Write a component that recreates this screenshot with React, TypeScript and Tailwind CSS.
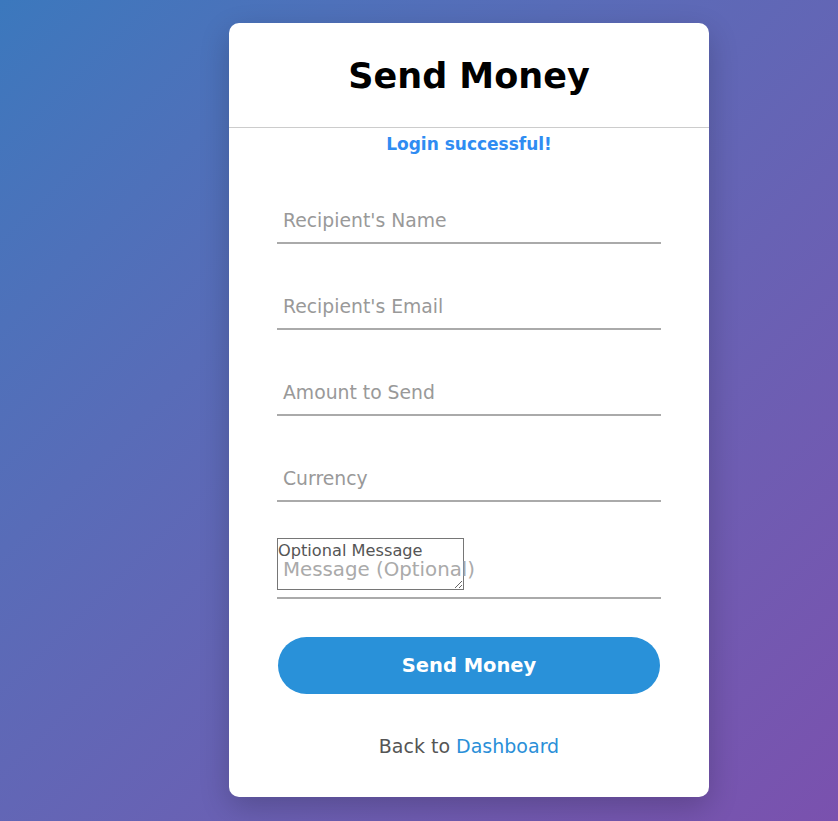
import React from "react";

const fields = ["Recipient's Name", "Recipient's Email", "Amount to Send", "Currency"];

function Field({ label }: { label: string }) {
  return (
    <div className="relative h-[45px] border-b-2 border-[#aaaaaa]">
      <input
        type="text"
        className="h-full w-full bg-transparent px-[6px] text-[18px] text-[#333] outline-none"
        aria-label={label}
      />
      <span className="pointer-events-none absolute left-[6px] top-1/2 -translate-y-1/2 text-[18.8px] text-[#999999]">
        {label}
      </span>
    </div>
  );
}

export default function App() {
  return (
    <div
      className="flex min-h-[821px] w-full justify-center bg-linear-to-br from-[#3b78bd] to-[#7a51ae] pl-[100px] pt-[23px]"
      style={{ fontFamily: "'DejaVu Sans', 'Open Sans', sans-serif" }}
    >
      <div className="h-[774px] w-[480px] rounded-[10px] bg-white shadow-[0_10px_30px_rgba(0,0,0,0.2)]">
        <div className="flex h-[105px] items-center justify-center border-b border-[#cccccc] pt-[2px]">
          <h1 className="text-[35px] font-semibold text-black">Send Money</h1>
        </div>
        <div className="flex h-[30px] items-center justify-center pt-[3px] text-[17px] font-semibold text-[#2f8cf2]">
          Login successful!
        </div>
        <form className="flex flex-col px-[48px] pt-[41px]">
          <div className="flex flex-col gap-[41px]">
            {fields.map((f) => (
              <Field key={f} label={f} />
            ))}
          </div>
          <div className="relative mt-[36px] h-[61px] border-b-2 border-[#aaaaaa]">
            <textarea
              placeholder="Optional Message"
              className="block h-[52px] w-[187px] resize border border-[#767676] pt-[4px] text-[16.2px] leading-[16px] text-[#555] placeholder:text-[#555] outline-none"
            />
            <span className="pointer-events-none absolute left-[6px] top-[17px] text-[19.8px] text-[#aaaaaa]">
              Message (Optional)
            </span>
          </div>
          <button
            type="button"
            className="mx-[1px] mt-[38px] h-[57px] rounded-full bg-[#2991d9] text-[19.5px] font-semibold text-white"
          >
            Send Money
          </button>
          <p className="mt-[38px] text-center text-[19px] text-[#555555]">
            Back to <a href="#" className="text-[#2a8fd8]">Dashboard</a>
          </p>
        </form>
      </div>
    </div>
  );
}
